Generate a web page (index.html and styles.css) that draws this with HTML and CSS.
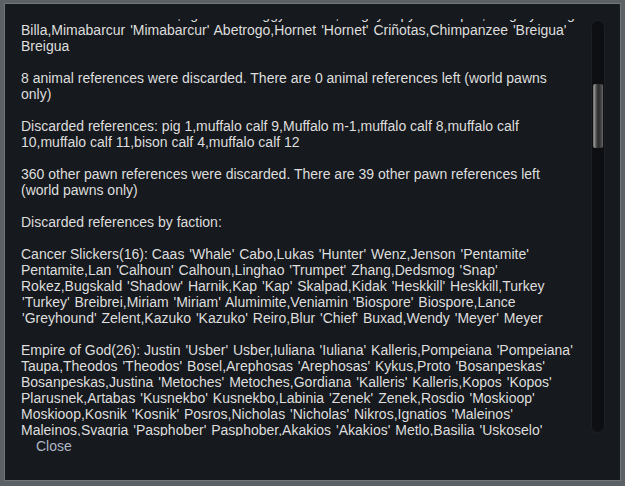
FILE: index.html
```html
<!DOCTYPE html>
<html>
<head>
<meta charset="utf-8">
<link rel="stylesheet" href="styles.css">
</head>
<body>
<div class="window">
  <div class="viewport">
    <div class="textarea">
      <div class="content">
        <p>Ramon <span class="nick">'Chicken'</span> Gomez,Agnieszka <span class="nick">'Aggy'</span> Nowak,Sergey <span class="nick">'Spyder'</span> Popov,Gregory <span class="nick">'Greg'</span> Ramon<br>Billa,Mimabarcur <span class="nick">'Mimabarcur'</span> Abetrogo,Hornet <span class="nick">'Hornet'</span> Criñotas,Chimpanzee <span class="nick">'Breigua'</span><br>Breigua</p>
        <p>8 animal references were discarded. There are 0 animal references left (world pawns<br>only)</p>
        <p>Discarded references: pig 1,muffalo calf 9,Muffalo m-1,muffalo calf 8,muffalo calf<br>10,muffalo calf 11,bison calf 4,muffalo calf 12</p>
        <p>360 other pawn references were discarded. There are 39 other pawn references left<br>(world pawns only)</p>
        <p>Discarded references by faction:</p>
        <p>Cancer Slickers(16): Caas <span class="nick">'Whale'</span> Cabo,Lukas <span class="nick">'Hunter'</span> Wenz,Jenson <span class="nick">'Pentamite'</span><br>Pentamite,Lan <span class="nick">'Calhoun'</span> Calhoun,Linghao <span class="nick">'Trumpet'</span> Zhang,Dedsmog <span class="nick">'Snap'</span><br>Rokez,Bugskald <span class="nick">'Shadow'</span> Harnik,Kap <span class="nick">'Kap'</span> Skalpad,Kidak <span class="nick">'Heskkill'</span> Heskkill,Turkey<br><span class="nick">'Turkey'</span> Breibrei,Miriam <span class="nick">'Miriam'</span> Alumimite,Veniamin <span class="nick">'Biospore'</span> Biospore,Lance<br><span class="nick">'Greyhound'</span> Zelent,Kazuko <span class="nick">'Kazuko'</span> Reiro,Blur <span class="nick">'Chief'</span> Buxad,Wendy <span class="nick">'Meyer'</span> Meyer</p>
        <p>Empire of God(26): Justin <span class="nick">'Usber'</span> Usber,Iuliana <span class="nick">'Iuliana'</span> Kalleris,Pompeiana <span class="nick">'Pompeiana'</span><br>Taupa,Theodos <span class="nick">'Theodos'</span> Bosel,Arephosas <span class="nick">'Arephosas'</span> Kykus,Proto <span class="nick">'Bosanpeskas'</span><br>Bosanpeskas,Justina <span class="nick">'Metoches'</span> Metoches,Gordiana <span class="nick">'Kalleris'</span> Kalleris,Kopos <span class="nick">'Kopos'</span><br>Plarusnek,Artabas <span class="nick">'Kusnekbo'</span> Kusnekbo,Labinia <span class="nick">'Zenek'</span> Zenek,Rosdio <span class="nick">'Moskioop'</span><br>Moskioop,Kosnik <span class="nick">'Kosnik'</span> Posros,Nicholas <span class="nick">'Nicholas'</span> Nikros,Ignatios <span class="nick">'Maleinos'</span><br>Maleinos,Svagria <span class="nick">'Pasphober'</span> Pasphober,Akakios <span class="nick">'Akakios'</span> Metlo,Basilia <span class="nick">'Uskoselo'</span><br>Uskoselo,Eudokia <span class="nick">'Eudokia'</span> Kalleris</p>
      </div>
    </div>
    <div class="scrolltrack">
      <div class="thumb"></div>
    </div>
  </div>
  <div class="footer">
    <span class="close">Close</span>
  </div>
</div>
</body>
</html>
```

FILE: styles.css
```css
html, body {
  margin: 0;
  padding: 0;
}
body {
  width: 625px;
  height: 486px;
  background: #5c6165;
  overflow: hidden;
  font-family: "Liberation Sans", Arial, sans-serif;
  font-size: 14px;
  line-height: 16px;
}
.window {
  box-sizing: border-box;
  margin: 3px 0 0 4px;
  width: 617px;
  height: 478px;
  background: #16191d;
  border: 1px solid #71767b;
  padding: 15px 15px 0 16px;
  display: flex;
  flex-direction: column;
}
.viewport {
  display: flex;
  height: 417px;
}
.textarea {
  flex: 1;
  overflow: hidden;
}
.content {
  margin-top: -13px;
  color: #dedede;
  white-space: nowrap;
}
.content p {
  margin: 0 0 16px 0;
}
.nick {
  padding: 0 1px;
}
.scrolltrack {
  box-sizing: border-box;
  width: 14px;
  margin-top: 1px;
  height: 413px;
  background: #0d0f12;
  border-radius: 7px;
  border: 1px solid #1c2025;
  padding-top: 63px;
  display: flex;
  justify-content: center;
}
.thumb {
  width: 10px;
  height: 64px;
  border-radius: 2px;
  background: linear-gradient(to right, #6a6a6a 0%, #8a8a8a 15%, #3a3a3a 40%, #2c2c2c 60%, #4a4a4a 85%, #6e6e6e 100%);
}
.footer {
  margin-top: 2px;
  padding-left: 15px;
}
.close {
  color: #aeb8c6;
  line-height: 16px;
}
```
